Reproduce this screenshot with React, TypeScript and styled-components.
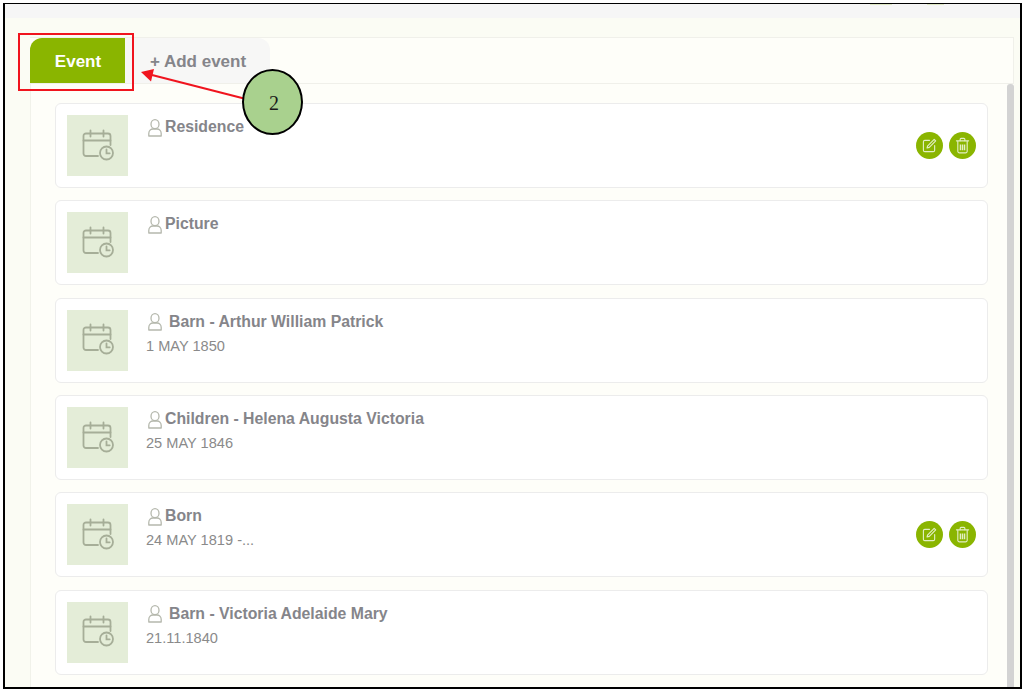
import React from "react";
import styled, { createGlobalStyle } from "styled-components";

const GlobalStyle = createGlobalStyle`
  html, body {
    margin: 0;
    padding: 0;
    background: #fff;
  }
  * {
    box-sizing: border-box;
  }
`;

const Page = styled.div`
  position: relative;
  width: 1026px;
  height: 693px;
  padding: 3px 0 0 3px;
  font-family: "Liberation Sans", Arial, sans-serif;
  overflow: hidden;
`;

const Frame = styled.div`
  width: 1019px;
  height: 686px;
  border: 2px solid #000;
  border-top-width: 1.5px;
  background: #fbfcf4;
  display: flex;
  flex-direction: column;
  overflow: hidden;
`;

const TopStrip = styled.div`
  height: 14px;
  flex: none;
  background: #f6f6f6;
  display: flex;
  padding-left: 865px;
  gap: 35px;
`;

const StripMark = styled.span<{ $w: number }>`
  width: ${(p) => p.$w}px;
  height: 1px;
  background: #dfe8c4;
`;

const Body = styled.div`
  flex: 1;
  min-height: 0;
  padding: 19px 6px 0 25px;
  display: flex;
  flex-direction: column;
`;

const TabBar = styled.div`
  height: 47px;
  flex: none;
  display: flex;
  align-items: flex-end;
  background: #fefef9;
  border: 1px solid #f0f0ea;
  border-left: none;
`;

const Tab = styled.div<{ $active?: boolean }>`
  height: 45px;
  display: flex;
  align-items: center;
  justify-content: center;
  font-size: 17px;
  font-weight: 700;
  width: ${(p) => (p.$active ? "95px" : "145px")};
  color: ${(p) => (p.$active ? "#fff" : "#85858a")};
  background: ${(p) => (p.$active ? "#8ab500" : "#f7f7f6")};
  border-radius: ${(p) => (p.$active ? "12px 0 0 0" : "0 12px 0 0")};
  padding: 2px 0 0 1px;
`;

const Content = styled.div`
  flex: 1;
  min-height: 0;
  display: flex;
  background: #fefef9;
  border-left: 1px solid #f1f2ea;
`;

const List = styled.div`
  width: 977px;
  padding: 19px 18px 0 24px;
  display: flex;
  flex-direction: column;
  gap: 12.35px;
`;

const ScrollTrack = styled.div`
  width: 7px;
  margin-left: 1px;
  background: #d3d3d3;
  border-radius: 3px 3px 0 0;
`;

const Card = styled.div`
  height: 85px;
  flex: none;
  display: flex;
  align-items: flex-start;
  padding: 11px 11px 0 11px;
  background: #fff;
  border: 1px solid #ececec;
  border-radius: 6px;
`;

const Thumb = styled.div`
  width: 61px;
  height: 61px;
  flex: none;
  display: flex;
  align-items: center;
  justify-content: center;
  padding-bottom: 2px;
  background: #e4edd8;
  color: #a6ae98;
`;

const Info = styled.div`
  flex: 1;
  min-width: 0;
  padding: 2px 0 0 18px;
`;

const TitleRow = styled.div`
  display: flex;
  align-items: center;
  height: 20px;
  color: #85858a;
  font-size: 15.8px;
  font-weight: 700;
`;

const PersonIcon = styled.svg`
  margin: 1px 3px 0 2px;
  flex: none;
  color: #b5b8ad;
`;

const TitleText = styled.span<{ $spaced?: boolean }>`
  margin-left: ${(p) => (p.$spaced ? "4px" : "0")};
`;

const DateText = styled.div`
  margin-top: 3px;
  padding-top: 2px;
  font-size: 14.6px;
  line-height: 18px;
  color: #8a8a8a;
`;

const Actions = styled.div`
  display: flex;
  gap: 6px;
  align-self: center;
  margin-top: -12px;
`;

const RoundButton = styled.div`
  width: 27px;
  height: 27px;
  border-radius: 50%;
  background: #8ab500;
  color: #e3efc4;
  display: flex;
  align-items: center;
  justify-content: center;
`;

const Highlight = styled.div`
  position: absolute;
  left: 18px;
  top: 33px;
  width: 116px;
  height: 58px;
  border: 2px solid #f0141e;
`;

const Arrow = styled.svg`
  position: absolute;
  left: 130px;
  top: 60px;
`;

const Badge = styled.div`
  position: absolute;
  left: 242px;
  top: 69px;
  width: 61px;
  height: 66px;
  border-radius: 50%;
  border: 2px solid #000;
  background: #a9d18e;
  display: flex;
  align-items: center;
  justify-content: center;
  font-family: "Liberation Serif", "Times New Roman", serif;
  font-size: 20px;
  color: #1a1a1a;
  padding: 3px 0 0 3px;
`;

function CalendarIcon() {
  return (
    <svg width="34" height="34" viewBox="0 0 34 34" fill="none" stroke="currentColor" strokeWidth="1.8" strokeLinecap="round">
      <path d="M17 28H5a2.5 2.5 0 0 1-2.500-2.500V8A2.500 2.500 0 0 1 5 5.500h22A2.500 2.500 0 0 1 29.500 8v9" />
      <path d="M2.500 12.500h27" />
      <path d="M9.500 2.500v6M22.500 2.500v6" />
      <circle cx="25.500" cy="25" r="6.500" />
      <path d="M25.500 21.500V25.300h3.200" />
    </svg>
  );
}

function Person() {
  return (
    <PersonIcon width="14" height="18" viewBox="0 0 14 18" fill="none" stroke="currentColor" strokeWidth="1.300">
      <ellipse cx="7" cy="5.200" rx="4" ry="4.500" />
      <path d="M.8 17v-2.600C.8 11.800 2.800 10 5 10h4c2.200 0 4.200 1.800 4.200 4.400V17z" strokeLinejoin="round" />
    </PersonIcon>
  );
}

function EditIcon() {
  return (
    <svg width="15" height="15" viewBox="0 0 16 16" fill="none" stroke="currentColor" strokeWidth="1.200" strokeLinecap="round" strokeLinejoin="round">
      <path d="M8 2.500H3a1.500 1.500 0 0 0-1.500 1.500v9A1.500 1.500 0 0 0 3 14.500h9a1.500 1.500 0 0 0 1.500-1.500V8" />
      <path d="M13 1.400l1.600 1.600-6.800 7-2.400.7.700-2.400z" />
    </svg>
  );
}

function TrashIcon() {
  return (
    <svg width="15" height="17" viewBox="0 0 16 18" fill="none" stroke="currentColor" strokeWidth="1.200" strokeLinecap="round">
      <path d="M1.500 4h13" />
      <path d="M5.500 3.800V2.400c0-.6.400-1 1-1h3c.6 0 1 .4 1 1v1.400" />
      <path d="M3 4.500V15a1.800 1.800 0 0 0 1.800 1.800h6.400A1.800 1.800 0 0 0 13 15V4.500" />
      <path d="M5.800 8v6M8 8v6M10.200 8v6" strokeWidth="1.500" strokeLinecap="butt" />
    </svg>
  );
}

type EventItem = {
  title: string;
  date?: string;
  spaced?: boolean;
  actions?: boolean;
};

const events: EventItem[] = [
  { title: "Residence", actions: true },
  { title: "Picture" },
  { title: "Barn - Arthur William Patrick", date: "1 MAY 1850", spaced: true },
  { title: "Children - Helena Augusta Victoria", date: "25 MAY 1846" },
  { title: "Born", date: "24 MAY 1819 -...", actions: true },
  { title: "Barn - Victoria Adelaide Mary", date: "21.11.1840", spaced: true },
];

export default function App() {
  return (
    <Page>
      <GlobalStyle />
      <Frame>
        <TopStrip>
          <StripMark $w={22} />
          <StripMark $w={17} />
        </TopStrip>
        <Body>
          <TabBar>
            <Tab $active>Event</Tab>
            <Tab>+ Add event</Tab>
          </TabBar>
          <Content>
            <List>
              {events.map((item) => (
                <Card key={item.title}>
                  <Thumb>
                    <CalendarIcon />
                  </Thumb>
                  <Info>
                    <TitleRow>
                      <Person />
                      <TitleText $spaced={item.spaced}>{item.title}</TitleText>
                    </TitleRow>
                    {item.date && <DateText>{item.date}</DateText>}
                  </Info>
                  {item.actions && (
                    <Actions>
                      <RoundButton>
                        <EditIcon />
                      </RoundButton>
                      <RoundButton>
                        <TrashIcon />
                      </RoundButton>
                    </Actions>
                  )}
                </Card>
              ))}
            </List>
            <ScrollTrack />
          </Content>
        </Body>
      </Frame>
      <Highlight />
      <Arrow width="120" height="50" viewBox="0 0 120 50">
        <path d="M114 38.500L22 15" stroke="#f0141e" strokeWidth="2" />
        <path d="M11 12L24 9L21 21.500z" fill="#f0141e" />
      </Arrow>
      <Badge>2</Badge>
    </Page>
  );
}
